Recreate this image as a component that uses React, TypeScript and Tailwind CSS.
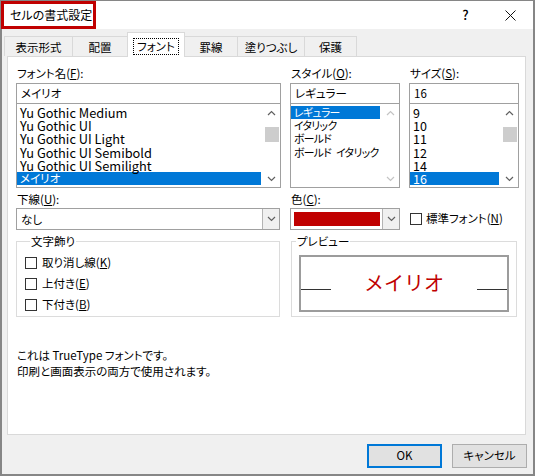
import React from 'react';

const FONT_NAMES = ['Yu Gothic Medium', 'Yu Gothic UI', 'Yu Gothic UI Light', 'Yu Gothic UI Semibold', 'Yu Gothic UI Semilight', 'メイリオ'];
const STYLES = ['レギュラー', 'イタリック', 'ボールド', 'ボールド\u2002イタリック'];
const SIZES = ['9', '10', '11', '12', '14', '16'];

const TABS = [
  { label: '表示形式', w: 'w-[69px]' },
  { label: '配置', w: 'w-[56px]' },
  { label: 'フォント', w: 'w-[58px]', active: true },
  { label: '罫線', w: 'w-[54px]' },
  { label: '塗りつぶし', w: 'w-[68px]' },
  { label: '保護', w: 'w-[53px]' },
];

const Chevron = ({ dir, color = '#606060' }: { dir: 'up' | 'down'; color?: string }) => (
  <svg width="9" height="6" viewBox="0 0 9 6">
    <path
      d={dir === 'up' ? 'M1 5 L4.5 1.5 L8 5' : 'M1 1 L4.5 4.5 L8 1'}
      fill="none"
      stroke={color}
      strokeWidth="1.2"
    />
  </svg>
);

const ScrollBar = ({ thumb }: { thumb: boolean }) => {
  const color = thumb ? '#606060' : '#c4c4c4';
  return (
    <div className="ml-[2px] flex w-[17px] flex-col">
      <div className="flex h-[17px] items-center justify-center">
        <Chevron dir="up" color={color} />
      </div>
      {thumb && <div className="mx-auto mt-[6px] h-[15px] w-[14px] bg-[#cdcdcd]" />}
      <div className="flex-1" />
      <div className="flex h-[16px] items-center justify-center">
        <Chevron dir="down" color={color} />
      </div>
    </div>
  );
};

const ListBox = ({
  items,
  selected,
  thumb,
  latin = '',
  cjk = '',
}: {
  items: string[];
  selected: number;
  thumb: boolean;
  latin?: string;
  cjk?: string;
}) => (
  <div className="-mt-px flex h-[85px] border border-[#a0a0a0] bg-white">
    <div className="flex-1 overflow-hidden pt-[2px]">
      {items.map((t, i) => {
        const isLatin = /^[\x20-\x7e]+$/.test(t);
        return (
          <div
            key={t}
            className={
              i === selected
                ? 'h-[13.2px] whitespace-nowrap bg-[#0078d7] pl-[3px] leading-[13.2px] text-white'
                : 'h-[13.2px] whitespace-nowrap pl-[3px] leading-[13.2px]'
            }
          >
            <span className={isLatin ? latin : cjk}>{t}</span>
          </div>
        );
      })}
    </div>
    <ScrollBar thumb={thumb} />
  </div>
);

const Label = ({ text, acc }: { text: string; acc: string }) => (
  <div className="h-[14px] pl-px leading-[14px]">
    {text}(<span className="underline">{acc}</span>):
  </div>
);

const Field = ({ value }: { value: string }) => (
  <div className="mt-[3px] h-[21px] border border-[#a0a0a0] bg-white pl-[4px] leading-[19px]">{value}</div>
);

const DropButton = () => (
  <div className="flex w-[17px] items-center justify-center border-l border-[#b4b4b4] bg-[#f0f0f0]">
    <Chevron dir="down" />
  </div>
);

const CheckBox = () => <span className="inline-block h-[12px] w-[12px] border border-[#333] bg-white" />;

const CheckRow = ({ text, acc }: { text: string; acc: string }) => (
  <div className="flex h-[21px] items-center gap-[5px]">
    <CheckBox />
    <span>
      {text}(<span className="underline">{acc}</span>)
    </span>
  </div>
);

export default function App() {
  return (
    <div className="flex h-[476px] w-[535px] flex-col border-x-2 border-b-2 border-t border-[#868686] bg-[#f0f0f0] font-['Noto_Sans_CJK_JP',sans-serif] text-[11.5px] text-black [font-feature-settings:'palt']">
      {/* title bar */}
      <div className="flex h-[28px] bg-white">
        <div className="-ml-px flex h-[28px] w-[95px] items-center whitespace-nowrap border-[3px] border-[#c00000] pl-[6px] text-[12px]">
          セルの書式設定
        </div>
        <div className="ml-auto flex">
          <div className="flex w-[45px] items-center justify-center text-[13px] font-medium">?</div>
          <div className="flex w-[45px] items-center justify-center">
            <svg width="11" height="11" viewBox="0 0 11 11">
              <path d="M0.5 0.5 L10.5 10.5 M10.5 0.5 L0.5 10.5" stroke="#111" strokeWidth="1" />
            </svg>
          </div>
        </div>
      </div>

      {/* tabs */}
      <div className="flex h-[27px] items-end pl-[3px]">
        {TABS.map((t) =>
          t.active ? (
            <div
              key={t.label}
              className={`${t.w} relative z-10 -mb-px -ml-px flex h-[25px] items-center justify-center border border-b-0 border-[#d9d9d9] bg-white pt-[2px]`}
            >
              <span className="border border-dotted border-black px-[3px] leading-[15px]">{t.label}</span>
            </div>
          ) : (
            <div
              key={t.label}
              className={`${t.w} -ml-px flex h-[20px] items-center justify-center border border-b-0 border-[#d9d9d9] bg-[#f0f0f0] pt-[3px]`}
            >
              {t.label}
            </div>
          )
        )}
      </div>

      {/* panel */}
      <div className="ml-[5px] mr-[7px] h-[379px] border border-[#d9d9d9] bg-white pl-[8px] pt-[9px]">
        {/* row 1 */}
        <div className="flex gap-[9px]">
          <div className="w-[265px]">
            <Label text="フォント名" acc="F" />
            <Field value="メイリオ" />
            <ListBox items={FONT_NAMES} selected={5} thumb latin="text-[12.8px]" />
          </div>
          <div className="w-[110px]">
            <Label text="スタイル" acc="O" />
            <Field value="レギュラー" />
            <ListBox items={STYLES} selected={0} thumb={false} cjk="text-[10.8px] tracking-[-0.6px]" />
          </div>
          <div className="w-[110px]">
            <Label text="サイズ" acc="S" />
            <Field value="16" />
            <ListBox items={SIZES} selected={5} thumb latin="text-[12.5px]" />
          </div>
        </div>

        {/* row 2 */}
        <div className="mt-[4px] flex gap-[10px]">
          <div className="w-[264px]">
            <Label text="下線" acc="U" />
            <div className="mt-[2px] flex h-[22px] border border-[#a0a0a0] bg-white">
              <div className="flex-1 pl-[4px] leading-[20px]">なし</div>
              <DropButton />
            </div>
          </div>
          <div className="w-[110px]">
            <Label text="色" acc="C" />
            <div className="mt-[2px] flex h-[22px] border border-[#a0a0a0] bg-white">
              <div className="flex flex-1 items-center pl-[3px] pr-[2px]">
                <div className="h-[14px] w-full bg-[#c00000]" />
              </div>
              <DropButton />
            </div>
          </div>
          <div className="mt-[16px] flex h-[22px] items-center gap-[4px]">
            <CheckBox />
            <span>
              標準フォント(<span className="underline">N</span>)
            </span>
          </div>
        </div>

        {/* row 3 */}
        <div className="mt-[4px] flex gap-[11px]">
          <fieldset className="h-[83px] w-[264px] border border-[#dcdcdc] pl-[8px]">
            <legend className="ml-[5px] px-px leading-[14px]">文字飾り</legend>
            <div className="pt-[4px]">
              <CheckRow text="取り消し線" acc="K" />
              <CheckRow text="上付き" acc="E" />
              <CheckRow text="下付き" acc="B" />
            </div>
          </fieldset>
          <fieldset className="h-[83px] w-[226px] border border-[#dcdcdc]">
            <legend className="ml-[4px] px-px leading-[14px]">プレビュー</legend>
            <div className="ml-[7px] mt-[7px] h-[57px] w-[210px] border-2 border-[#9c9c9c]">
              <div className="flex items-start pt-[13px]">
                <div className="mt-[19px] h-px w-[30px] bg-[#333]" />
                <div className="flex-1 text-center text-[20px] leading-[26px] text-[#c00000] [font-feature-settings:normal]">
                  メイリオ
                </div>
                <div className="mt-[19px] h-px w-[30px] bg-[#333]" />
              </div>
            </div>
          </fieldset>
        </div>

        {/* note */}
        <div className="mt-[30px] pl-px leading-[16px]">
          <div>これは TrueType フォントです。</div>
          <div>印刷と画面表示の両方で使用されます。</div>
        </div>
      </div>

      {/* buttons */}
      <div className="flex justify-end gap-[10px] pr-[6px] pt-[9px]">
        <button className="h-[24px] w-[75px] border-2 border-[#0078d7] bg-[#e1e1e1]">OK</button>
        <button className="h-[24px] w-[75px] border border-[#adadad] bg-[#e1e1e1]">キャンセル</button>
      </div>
    </div>
  );
}
